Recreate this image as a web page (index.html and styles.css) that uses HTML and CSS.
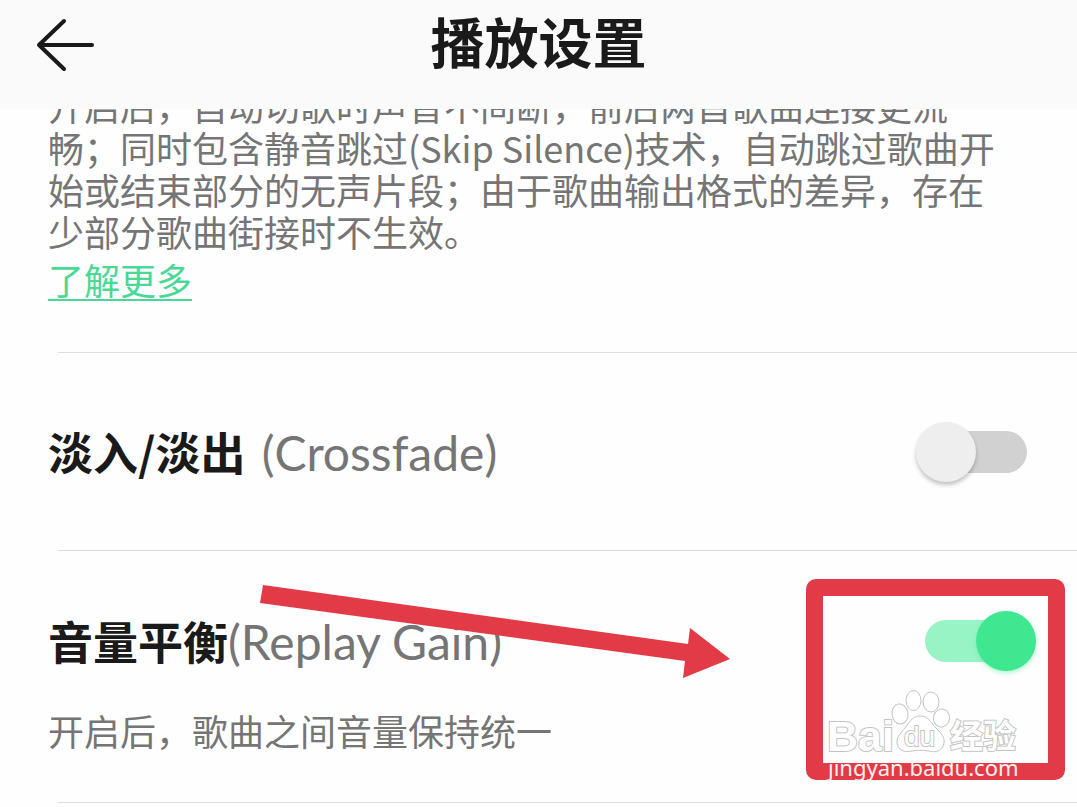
FILE: index.html
```html
<!DOCTYPE html>
<html lang="zh-CN">
<head>
<meta charset="utf-8">
<meta name="viewport" content="width=device-width, initial-scale=1">
<title>播放设置</title>
<link rel="stylesheet" href="styles.css">
</head>
<body>
<header class="topbar">
  <button class="back" type="button" aria-label="返回">
    <svg width="60" height="56" viewBox="0 0 60 56" fill="none" stroke="#1a1a1a" stroke-width="4" stroke-linecap="round" stroke-linejoin="round" aria-hidden="true">
      <path d="M28 4 3 28l25 24M3 28h53"/>
    </svg>
  </button>
  <h1 class="title">播放设置</h1>
</header>
<main class="settings">
  <section class="item intro">
    <p class="desc">开启后，自动切歌时声音不间断，前后两首歌曲连接更流畅；同时包含静音跳过(Skip Silence)技术，自动跳过歌曲开始或结束部分的无声片段；由于歌曲输出格式的差异，存在少部分歌曲街接时不生效。</p>
    <a class="more" href="#">了解更多</a>
  </section>
  <section class="item crossfade">
    <label class="name" for="crossfade">淡入/淡出 <span class="latin">(Crossfade)</span></label>
    <input class="switch" id="crossfade" type="checkbox" role="switch">
  </section>
  <section class="item gain">
    <div class="row">
      <label class="name" for="gain">音量平衡<span class="latin">(Replay Gain)</span></label>
      <input class="switch" id="gain" type="checkbox" role="switch" checked>
    </div>
    <p class="desc">开启后，歌曲之间音量保持统一</p>
    <svg class="arrow" width="480" height="100" viewBox="255 582 480 100" aria-hidden="true">
      <path fill="#e23a46" d="M263 586 688 645 690 629 730 660 683 679 685 662 260 604z"/>
    </svg>
    <div class="frame"></div>
    <svg class="watermark" width="200" height="100" viewBox="822 688 200 100" role="img" aria-label="Baidu 经验">
      <g class="logo">
        <text x="827" y="752" font-size="43">Bai</text>
        <ellipse cx="900" cy="715" rx="8" ry="10" transform="rotate(-8 900 715)"/>
        <ellipse cx="913.500" cy="701.500" rx="7.500" ry="10"/>
        <ellipse cx="931" cy="703" rx="8" ry="10"/>
        <ellipse cx="941.500" cy="719" rx="8" ry="9" transform="rotate(14 941.500 719)"/>
        <path d="M920 717c9 0 12 8 16 12 5 5 9 9 8 15-1 8-9 10-15 8-6-1-12-1-17 0-7 2-15-1-15-9 0-6 4-9 8-14s7-12 15-12z"/>
        <text class="du" x="904" y="747" font-size="28">du</text>
        <text class="cjk" x="950" y="749" font-size="33">经验</text>
      </g>
      <text class="url" x="828" y="777" font-size="22">jingyan.baidu.com</text>
    </svg>
  </section>
</main>
</body>
</html>
```
FILE: styles.css
```css
* {
  box-sizing: border-box;
}

body {
  margin: 0;
  background: #fefefe;
  color: #757575;
  font-family: "Noto Sans CJK SC", sans-serif;
}

.topbar {
  display: grid;
  grid-template-columns: 60px 1fr 60px;
  align-items: start;
  padding: 0 36px 27px;
  background: #fafafa;
  position: relative;
  z-index: 1;
}

.back {
  display: block;
  padding: 17px 0 0;
  border: 0;
  background: none;
}

.back svg {
  display: block;
}

.title {
  margin: 0;
  color: #1a1a1a;
  font-size: 54px;
  font-weight: 700;
  line-height: 82px;
  text-align: center;
}

.settings {
  overflow: hidden;
}

.item {
  position: relative;
  padding-left: 48px;
  padding-right: 50px;
}

.item::after {
  content: "";
  position: absolute;
  left: 58px;
  right: 0;
  bottom: 0;
  height: 1px;
  background: #dedede;
}

.desc {
  margin: 0;
  font-size: 36px;
  line-height: 42px;
  font-weight: 400;
}

.intro {
  padding-right: 72px;
  padding-bottom: 49px;
}

.intro .desc {
  margin-top: -25px;
}

.more {
  display: inline-block;
  margin-top: 2px;
  color: #4bd897;
  font-size: 36px;
  line-height: 50px;
  text-decoration-thickness: 2px;
  text-underline-offset: 4px;
}

.crossfade,
.row {
  display: flex;
  align-items: center;
  justify-content: space-between;
}

.row {
  min-height: 74px;
}

.crossfade {
  min-height: 198px;
}

.gain {
  padding-top: 53px;
  padding-bottom: 52px;
}

.gain .desc {
  margin-top: 31px;
}

.name {
  color: #1a1a1a;
  font-size: 45px;
  line-height: 72px;
  font-weight: 700;
}

.latin {
  color: #757575;
  font-family: Lato, sans-serif;
  font-size: 48px;
  font-weight: 400;
}

.crossfade .latin {
  margin-left: 6px;
}

.switch {
  appearance: none;
  position: relative;
  width: 102px;
  height: 42px;
  margin: 0;
  border-radius: 21px;
  background: #d1d1d1;
}

.switch::before {
  content: "";
  position: absolute;
  top: -9px;
  left: -9px;
  width: 60px;
  height: 60px;
  border-radius: 50%;
  background: #eeeeee;
  box-shadow: 0 3px 4px rgba(0, 0, 0, 0.24);
}

.switch:checked {
  background: #99f4c5;
}

.switch:checked::before {
  left: auto;
  right: -9px;
  background: #3fe890;
  box-shadow: 0 2px 5px rgba(63, 232, 144, 0.4);
}

.arrow {
  position: absolute;
  left: 255px;
  top: 30px;
}

.frame {
  position: absolute;
  top: 28px;
  right: 12px;
  width: 259px;
  height: 201px;
  border: 17px solid #e23a46;
  border-radius: 10px;
  pointer-events: none;
}

.watermark {
  position: absolute;
  right: 55px;
  top: 136px;
  pointer-events: none;
}

.logo {
  fill: #ffffff;
  stroke: #c4c4c4;
  stroke-width: 1;
  font-family: "Liberation Sans", sans-serif;
  font-weight: 700;
}

.logo text {
  stroke-width: 2;
  paint-order: stroke;
}

.logo .du {
  font-weight: 400;
}

.logo .cjk {
  font-family: "Noto Sans CJK SC", sans-serif;
}

.url {
  fill: #fdf1f2;
  font-family: "Noto Sans", sans-serif;
}
```
